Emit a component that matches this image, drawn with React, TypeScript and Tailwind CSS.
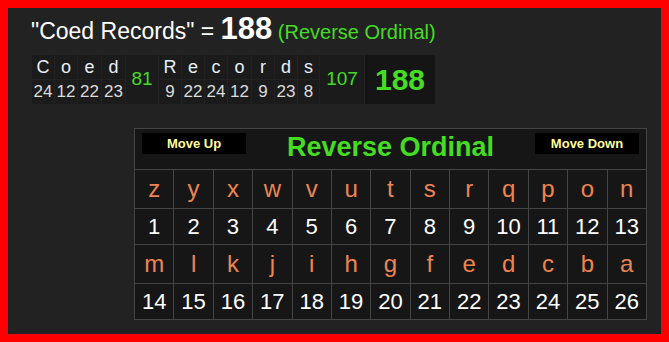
import React from "react";

const font = { fontFamily: '"Liberation Sans", Arial, sans-serif' };

const row1Letters = "zyxwvutsrqpon".split("");
const row2Letters = "mlkjihgfedcba".split("");

export default function App() {
  const coed = [
    ["C", "24"],
    ["o", "12"],
    ["e", "22"],
    ["d", "23"],
  ];
  const records = [
    ["R", "9"],
    ["e", "22"],
    ["c", "24"],
    ["o", "12"],
    ["r", "9"],
    ["d", "23"],
    ["s", "8"],
  ];
  const wCoed = ["w-[22px]", "w-[22px]", "w-[23px]", "w-[23px]"];
  const wRec = ["w-[22px]", "w-[22px]", "w-[22px]", "w-[23px]", "w-[22px]", "w-[22px]", "w-[21px]"];

  return (
    <div style={font} className="w-[669px] h-[342px] border-8 border-[#ff0000] bg-[#222222] overflow-hidden">
      <div className="pl-[23px] pt-[5px] flex flex-col">
        <div className="flex items-baseline whitespace-pre">
          <span className="text-[23px] leading-[23px] text-white">"Coed Records" = </span>
          <span className="text-[31px] leading-[31px] font-bold text-white">188</span>
          <span className="text-[20px] leading-[20px] text-[#44dd22]"> (Reverse Ordinal)</span>
        </div>
        <table className="mt-[10px] border-separate border-spacing-[1px] bg-[#222222] table-fixed w-[405px]">
          <tbody>
            <tr className="h-[24px]">
              {coed.map(([l], i) => (
                <td key={"c" + i} className={`${wCoed[i]} bg-[#1b1b1b] p-0 text-center text-[18px] leading-[24px] text-[#e6f0fa]`}>
                  {l}
                </td>
              ))}
              <td rowSpan={2} className="w-[32px] bg-[#1b1b1b] p-0 text-center text-[19px] text-[#44dd22]">
                81
              </td>
              {records.map(([l], i) => (
                <td key={"r" + i} className={`${wRec[i]} bg-[#1b1b1b] p-0 text-center text-[18px] leading-[24px] text-[#e6f0fa]`}>
                  {l}
                </td>
              ))}
              <td rowSpan={2} className="w-[44px] bg-[#1b1b1b] p-0 text-center text-[19px] text-[#44dd22]">
                107
              </td>
              <td rowSpan={2} className="w-[70px] bg-[#151515] p-0 text-center text-[30px] font-bold text-[#44dd22]">
                188
              </td>
            </tr>
            <tr className="h-[24px]">
              {coed.map(([, n], i) => (
                <td key={"cn" + i} className="bg-[#1b1b1b] p-0 text-center text-[17px] leading-[24px] text-[#dcdcdc]">
                  {n}
                </td>
              ))}
              {records.map(([, n], i) => (
                <td key={"rn" + i} className="bg-[#1b1b1b] p-0 text-center text-[17px] leading-[24px] text-[#dcdcdc]">
                  {n}
                </td>
              ))}
            </tr>
          </tbody>
        </table>
        <table className="ml-[103px] mt-[23px] w-[513px] table-fixed border-collapse bg-[#161616]">
          <tbody>
            <tr>
              <td colSpan={13} className="border border-[#444444] h-[41px] p-0 align-top">
                <div className="flex items-start justify-between px-[7px] pt-[4px]">
                  <div className="w-[104px] h-[21px] bg-black flex items-center justify-center text-[13px] font-bold text-[#ffff99]">
                    Move Up
                  </div>
                  <div className="text-[27px] leading-[29px] font-bold text-[#44dd22]">Reverse Ordinal</div>
                  <div className="w-[104px] h-[21px] bg-black flex items-center justify-center text-[13px] font-bold text-[#ffff99]">
                    Move Down
                  </div>
                </div>
              </td>
            </tr>
            <tr className="h-[39px]">
              {row1Letters.map((l) => (
                <td key={l} className="border border-[#444444] p-0 text-center text-[24px] text-[#ee8550]">
                  {l}
                </td>
              ))}
            </tr>
            <tr className="h-[36px]">
              {row1Letters.map((_, i) => (
                <td key={i} className="border border-[#444444] p-0 text-center text-[22px] text-white">
                  {i + 1}
                </td>
              ))}
            </tr>
            <tr className="h-[39px]">
              {row2Letters.map((l) => (
                <td key={l} className="border border-[#444444] p-0 text-center text-[24px] text-[#ee8550]">
                  {l}
                </td>
              ))}
            </tr>
            <tr className="h-[36px]">
              {row2Letters.map((_, i) => (
                <td key={i} className="border border-[#444444] p-0 text-center text-[22px] text-white">
                  {i + 14}
                </td>
              ))}
            </tr>
          </tbody>
        </table>
      </div>
    </div>
  );
}
